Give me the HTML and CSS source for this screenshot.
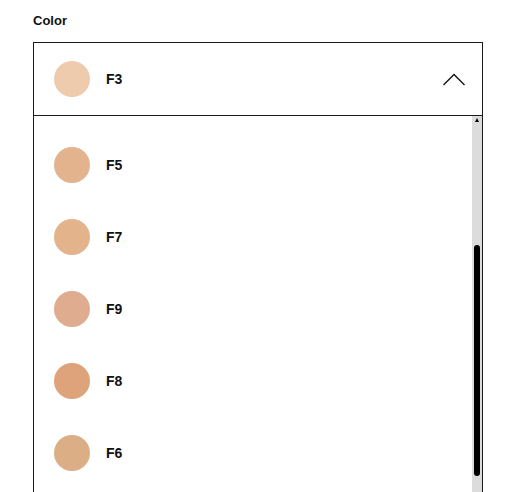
FILE: index.html
```html
<!DOCTYPE html>
<html>
<head>
<meta charset="utf-8">
<link rel="stylesheet" href="styles.css">
</head>
<body>
<div class="field">
  <div class="label">Color</div>
  <div class="select">
    <div class="header">
      <span class="swatch" style="background:#efcbae"></span>
      <span class="name">F3</span>
      <svg class="chev" width="22" height="13" viewBox="0 0 22 13"><path d="M0.5 12 L11 1.5 L21.5 12" fill="none" stroke="#111" stroke-width="1.3"/></svg>
    </div>
    <div class="list">
      <div class="items">
        <div class="item"><span class="swatch" style="background:#e3b38d"></span><span class="name">F5</span></div>
        <div class="item"><span class="swatch" style="background:#e3b38c"></span><span class="name">F7</span></div>
        <div class="item"><span class="swatch" style="background:#dfac8f"></span><span class="name">F9</span></div>
        <div class="item"><span class="swatch" style="background:#dea37a"></span><span class="name">F8</span></div>
        <div class="item"><span class="swatch" style="background:#dbae86"></span><span class="name">F6</span></div>
      </div>
      <div class="scrollbar">
        <div class="arrow"></div>
        <div class="thumb"></div>
      </div>
    </div>
  </div>
</div>
</body>
</html>
```
FILE: styles.css
```css
html, body {
  margin: 0;
  padding: 0;
  background: #fff;
  height: 492px;
  overflow: hidden;
}
body {
  font-family: "Liberation Sans", Arial, sans-serif;
  color: #111;
}
.field {
  padding: 13px 40px 0 33px;
}
.label {
  font-size: 13px;
  font-weight: bold;
  line-height: 15px;
  margin-bottom: 14px;
}
.select {
  border: 1px solid #1a1a1a;
  border-bottom: none;
  width: 448px;
}
.header {
  display: flex;
  align-items: center;
  height: 72px;
  padding: 0 17px 0 20px;
  border-bottom: 1px solid #1a1a1a;
}
.swatch {
  width: 36px;
  height: 36px;
  border-radius: 50%;
  flex: none;
}
.name {
  margin-left: 16px;
  font-size: 14px;
  font-weight: bold;
  flex: 1;
}
.chev {
  display: block;
}
.list {
  display: flex;
  height: 376px;
  overflow: hidden;
}
.items {
  flex: 1;
  padding-top: 13px;
}
.item {
  display: flex;
  align-items: center;
  height: 72px;
  padding-left: 20px;
}
.scrollbar {
  width: 10px;
  background: #dcdcdc;
  position: relative;
  flex: none;
}
.arrow {
  position: absolute;
  left: 3px;
  top: 2px;
  width: 0;
  height: 0;
  border-left: 2.5px solid transparent;
  border-right: 2.5px solid transparent;
  border-bottom: 4px solid #000;
}
.thumb {
  position: absolute;
  left: 2px;
  top: 129px;
  width: 6px;
  height: 231px;
  border-radius: 3px;
  background: #000;
}
```
